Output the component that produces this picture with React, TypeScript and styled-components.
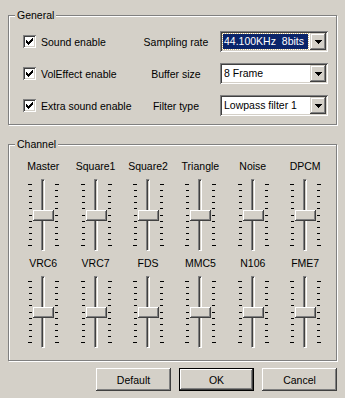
import styled, { createGlobalStyle } from 'styled-components';

const GlobalStyle = createGlobalStyle`
  html, body {
    margin: 0;
    padding: 0;
    background: #d4d0c8;
  }
  body {
    font-family: "Liberation Sans", Arial, sans-serif;
    font-size: 10.5px;
    color: #000;
  }
`;

const generalRows = [
  { check: 'Sound enable', label: 'Sampling rate', value: '44.100KHz\u00a0\u00a08bits', selected: true },
  { check: 'VolEffect enable', label: 'Buffer size', value: '8 Frame' },
  { check: 'Extra sound enable', label: 'Filter type', value: 'Lowpass filter 1' },
];

const channels = [
  ['Master', 'Square1', 'Square2', 'Triangle', 'Noise', 'DPCM'],
  ['VRC6', 'VRC7', 'FDS', 'MMC5', 'N106', 'FME7'],
];

const TICKS = 11;

function CheckBox() {
  return (
    <Box>
      <svg width="7" height="7" viewBox="0 0 7 7" shapeRendering="crispEdges">
        <path d="M6 0h1v3h-1v1h-1v1h-1v1h-1v1h-1v-1h-1v-1h-1v-3h1v1h1v1h1v-1h1v-1h1z" fill="#000" />
      </svg>
    </Box>
  );
}

function Combo({ value, selected }: { value: string; selected?: boolean }) {
  return (
    <ComboBox>
      <ComboValue $selected={selected}>{value}</ComboValue>
      <ArrowButton>
        <svg width="7" height="4" viewBox="0 0 7 4" shapeRendering="crispEdges">
          <path d="M0 0h7v1h-1v1h-1v1h-1v1h-1v-1h-1v-1h-1v-1h-1z" fill="#000" />
        </svg>
      </ArrowButton>
    </ComboBox>
  );
}

function Ticks({ side }: { side: 'left' | 'right' }) {
  return (
    <svg width="4" height="72" viewBox="0 0 4 72" shapeRendering="crispEdges">
      {Array.from({ length: TICKS }, (_, i) => {
        const y = Math.round(5 + (i * 61) / (TICKS - 1));
        const end = i === 0 || i === TICKS - 1;
        const x = side === 'left' ? (end ? 0 : 1) : 0;
        return <rect key={i} x={x} y={y} width={end ? 4 : 3} height={1} fill="#000" />;
      })}
    </svg>
  );
}

function Slider({ name }: { name: string }) {
  return (
    <SliderColumn>
      <SliderLabel>{name}</SliderLabel>
      <SliderControl>
        <Ticks side="left" />
        <Track>
          <Thumb />
        </Track>
        <Ticks side="right" />
      </SliderControl>
    </SliderColumn>
  );
}

export default function App() {
  return (
    <>
      <GlobalStyle />
      <Window>
        <Group>
          <Legend>General</Legend>
          <GeneralGrid>
            {generalRows.map((row) => (
              <Row key={row.check}>
                <CheckLabel>
                  <CheckBox />
                  <span>{row.check}</span>
                </CheckLabel>
                <FieldLabel>{row.label}</FieldLabel>
                <Combo value={row.value} selected={row.selected} />
              </Row>
            ))}
          </GeneralGrid>
        </Group>

        <ChannelGroup>
          <Legend>Channel</Legend>
          <ChannelGrid>
            {channels.flat().map((name) => (
              <Slider key={name} name={name} />
            ))}
          </ChannelGrid>
        </ChannelGroup>

        <Footer>
          <Button>Default</Button>
          <Button $default>OK</Button>
          <Button>Cancel</Button>
        </Footer>
      </Window>
    </>
  );
}

const Window = styled.div`
  width: 345px;
  height: 398px;
  box-sizing: border-box;
  padding: 15px 8px 0 8px;
  display: flex;
  flex-direction: column;
`;

const Group = styled.section`
  position: relative;
  border: 1px solid #808080;
  box-shadow: inset 1px 1px 0 #fff, 1px 1px 0 #fff;
  padding: 15px 7px 8px 14px;
`;

const ChannelGroup = styled(Group)`
  margin-top: 19px;
  padding: 15px 4px 12px 8px;
`;

const Legend = styled.span`
  position: absolute;
  top: -7px;
  left: 6px;
  padding: 0 2px;
  line-height: 13px;
  background: #d4d0c8;
`;

const GeneralGrid = styled.div`
  display: grid;
  grid-auto-rows: 21px;
  row-gap: 11px;
`;

const Row = styled.div`
  display: grid;
  grid-template-columns: 113px 80px 1fr;
  align-items: center;
`;

const CheckLabel = styled.label`
  display: flex;
  align-items: center;
  gap: 5px;
  white-space: nowrap;
`;

const Box = styled.span`
  width: 13px;
  height: 13px;
  box-sizing: border-box;
  background: #fff;
  box-shadow: inset 1px 1px 0 #808080, inset -1px -1px 0 #fff,
    inset 2px 2px 0 #404040, inset -2px -2px 0 #d4d0c8;
  display: flex;
  align-items: center;
  justify-content: center;
  flex: none;
`;

const FieldLabel = styled.span`
  text-align: center;
  white-space: nowrap;
`;

const ComboBox = styled.div`
  margin-left: 4px;
  width: 108px;
  height: 21px;
  box-sizing: border-box;
  padding: 2px;
  background: #fff;
  box-shadow: inset 1px 1px 0 #808080, inset -1px -1px 0 #fff,
    inset 2px 2px 0 #404040, inset -2px -2px 0 #d4d0c8;
  display: flex;
`;

const ComboValue = styled.span<{ $selected?: boolean }>`
  flex: 1;
  margin: 1px 2px 1px 1px;
  padding-left: 1px;
  line-height: 15px;
  white-space: nowrap;
  overflow: hidden;
  background: ${(p) => (p.$selected ? '#0a246a' : 'transparent')};
  color: ${(p) => (p.$selected ? '#fff' : '#000')};
  outline: ${(p) => (p.$selected ? '1px dotted #c8b078' : 'none')};
`;

const ArrowButton = styled.span`
  width: 16px;
  height: 17px;
  flex: none;
  background: #d4d0c8;
  box-shadow: inset -1px -1px 0 #404040, inset 1px 1px 0 #d4d0c8,
    inset -2px -2px 0 #808080, inset 2px 2px 0 #fff;
  display: flex;
  align-items: center;
  justify-content: center;
`;

const ChannelGrid = styled.div`
  display: grid;
  grid-template-columns: repeat(6, 52.4px);
  row-gap: 6px;
`;

const SliderColumn = styled.div`
  display: flex;
  flex-direction: column;
  align-items: center;
`;

const SliderLabel = styled.span`
  line-height: 13px;
  margin-bottom: 6px;
  white-space: nowrap;
`;

const SliderControl = styled.div`
  height: 72px;
  display: flex;
  align-items: flex-start;
  margin-left: 1px;
`;

const Track = styled.div`
  position: relative;
  width: 4px;
  height: 72px;
  box-sizing: border-box;
  margin: 0 10px 0 9px;
  border: 1px solid;
  border-color: #808080 #fff #fff #808080;
  box-shadow: inset 1px 1px 0 #404040;
`;

const Thumb = styled.div`
  position: absolute;
  left: -9px;
  top: 30px;
  width: 21px;
  height: 11px;
  background: #d4d0c8;
  box-shadow: inset -1px -1px 0 #404040, inset 1px 1px 0 #fff,
    inset -2px -2px 0 #808080;
`;

const Footer = styled.div`
  margin-top: 7px;
  display: flex;
  justify-content: flex-end;
  gap: 8px;
`;

const Button = styled.button<{ $default?: boolean }>`
  width: 75px;
  height: 23px;
  padding: 0;
  font: inherit;
  color: #000;
  background: #d4d0c8;
  border: ${(p) => (p.$default ? '1px solid #000' : 'none')};
  box-shadow: inset -1px -1px 0 #404040, inset 1px 1px 0 #fff,
    inset -2px -2px 0 #808080, inset 2px 2px 0 #d4d0c8;
`;
